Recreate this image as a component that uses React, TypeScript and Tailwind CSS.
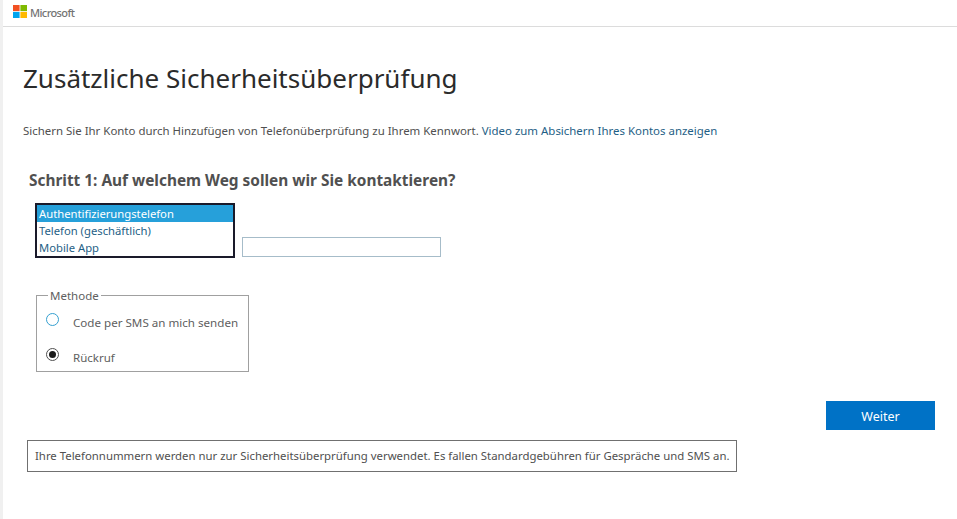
const FONT = "font-['Noto_Sans','Open_Sans',sans-serif]";

const MicrosoftLogo = () => (
  <svg width="14" height="13" viewBox="0 0 14 13" className="block">
    <rect x="0" y="0" width="6.6" height="6.1" fill="#f25022" />
    <rect x="7.4" y="0" width="6.6" height="6.1" fill="#7fba00" />
    <rect x="0" y="6.9" width="6.6" height="6.1" fill="#00a4ef" />
    <rect x="7.4" y="6.9" width="6.6" height="6.1" fill="#ffb900" />
  </svg>
);

const options = ["Authentifizierungstelefon", "Telefon (geschäftlich)", "Mobile App"];

const App = () => {
  return (
    <div className={`${FONT} flex h-[519px] w-[957px] overflow-hidden bg-white text-[#505050]`}>
      <div className="w-[3px] shrink-0 bg-[#f0f0f0]" />
      <div className="min-w-0 flex-1">
        <header className="flex h-[27px] items-start gap-[3px] border-b border-[#dcdcdc] pl-[10px] pt-[5px]">
          <MicrosoftLogo />
          <span className="text-[11px] leading-[15px] font-medium tracking-[-0.6px] text-[#737373]">Microsoft</span>
        </header>

        <h1 className="ml-[20px] mt-[31px] text-[26px] leading-[40px] font-normal text-[#2b2b2b]">
          Zusätzliche Sicherheitsüberprüfung
        </h1>

        <p className="ml-[20px] mt-[24px] whitespace-nowrap text-[11.45px] leading-[18px] text-[#505050]">
          Sichern Sie Ihr Konto durch Hinzufügen von Telefonüberprüfung zu Ihrem Kennwort.{" "}
          <a href="#" className="text-[#1f5f86]">Video zum Absichern Ihres Kontos anzeigen</a>
        </p>

        <h2 className="ml-[26px] mt-[29px] whitespace-nowrap text-[15.4px] leading-[24px] font-bold text-[#505050]">
          Schritt 1: Auf welchem Weg sollen wir Sie kontaktieren?
        </h2>

        <div className="ml-[32px] mt-[10px] flex items-end gap-[7px]">
          <ul className="h-[55px] w-[200px] border-2 border-[#1a1a2a] bg-white text-[11.25px] leading-[17px]">
            {options.map((option, i) => (
              <li
                key={option}
                className={i === 0 ? "bg-[#26a0da] pl-[2px] text-white" : "pl-[2px] text-[#1f5f86]"}
              >
                {option}
              </li>
            ))}
          </ul>
          <input
            aria-label="Telefonnummer"
            className="mb-[1px] h-[20px] w-[199px] border border-[#a6bcc9] bg-white outline-none"
          />
        </div>

        <fieldset className="ml-[33px] mt-[30px] h-[84px] w-[213px] border border-[#a0a0a0] pl-[11px] pr-0 pt-0">
          <legend className="px-[2px] text-[11.5px] leading-[15px] text-[#606060]">Methode</legend>
          <label className="ml-[-2px] mt-[8px] flex h-[20px] items-center">
            <span className="mb-[3px] h-[13px] w-[13px] rounded-full border border-[#35a0d0] bg-white" />
            <span className="ml-[14px] whitespace-nowrap pt-[3px] text-[11.6px] text-[#606060]">Code per SMS an mich senden</span>
          </label>
          <label className="ml-[-2px] mt-[15px] flex h-[20px] items-center">
            <span className="mb-[3px] flex h-[13px] w-[13px] items-center justify-center rounded-full border border-[#505050] bg-white">
              <span className="h-[7px] w-[7px] rounded-full bg-[#1a1a1a]" />
            </span>
            <span className="ml-[14px] pt-[4px] text-[11.5px] text-[#606060]">Rückruf</span>
          </label>
        </fieldset>

        <div className="mt-[29px] flex justify-end pr-[22px]">
          <button className="h-[29px] w-[109px] bg-[#0072c6] pt-[2px] text-[12.5px] leading-[18px] text-white">Weiter</button>
        </div>

        <p className="ml-[24px] mt-[10px] flex h-[32px] w-[710px] items-center whitespace-nowrap border border-[#707070] pl-[7px] text-[11.39px] text-[#505050]">
          Ihre Telefonnummern werden nur zur Sicherheitsüberprüfung verwendet. Es fallen Standardgebühren für Gespräche und SMS an.
        </p>
      </div>
    </div>
  );
};

export default App;
